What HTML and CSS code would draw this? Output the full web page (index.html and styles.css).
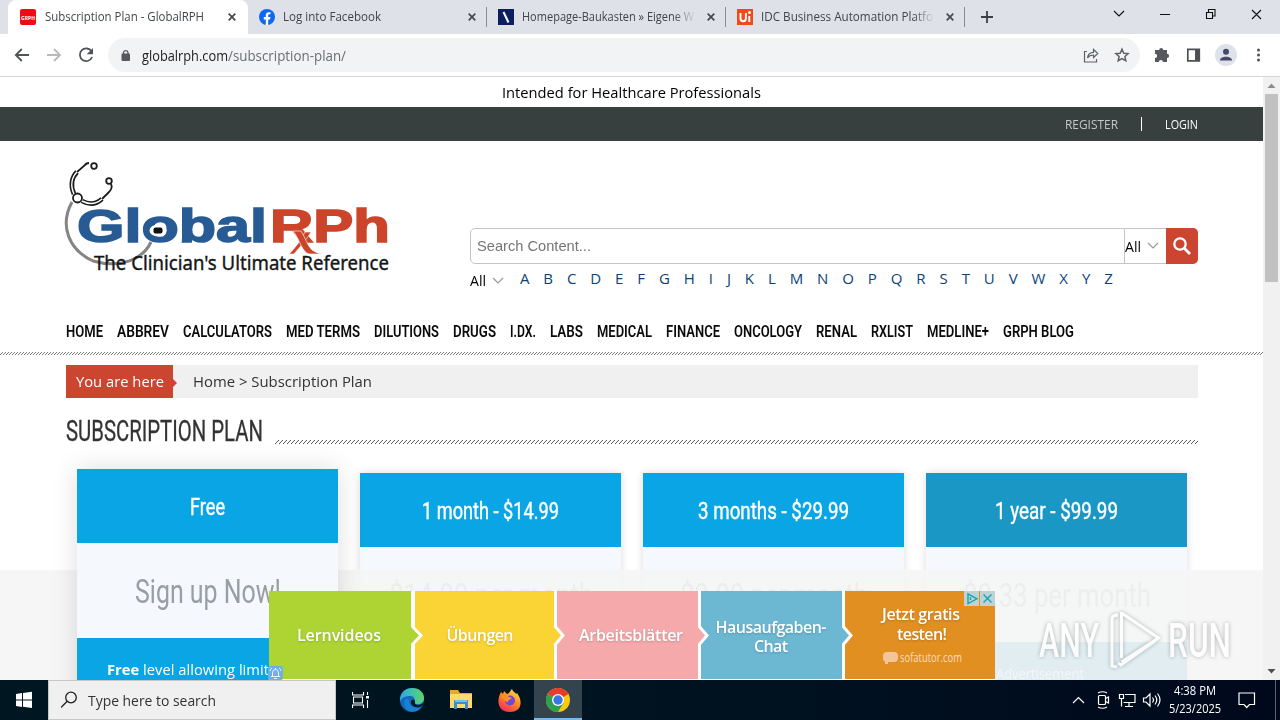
FILE: index.html
```html
<!DOCTYPE html>
<html lang="en">

<head>
  <meta charset="UTF-8">
  <meta name="viewport" content="width=device-width, initial-scale=1.0">
  <title>Subscription Plan - GlobalRPH</title>
  <link rel="stylesheet" href="styles.css">
</head>

<body>
  <div class="tabs">
    <div class="tab active">
      <svg class="favicon" width="16" height="16"><rect width="16" height="16" rx="2" fill="#f00a14"/><text x="1" y="10.5" font-size="6" font-weight="700" fill="#fff" textLength="14" lengthAdjust="spacingAndGlyphs">GRPH</text></svg>
      <div class="tab-title"><span data-w="159">Subscription Plan - GlobalRPH</span></div>
      <svg class="close" width="8" height="8"><path d="M.7.7l6.6 6.6M7.3.7L.7 7.3"/></svg>
    </div>
    <div class="tab">
      <svg class="favicon" width="16" height="16"><circle cx="8" cy="8" r="8" fill="#1068ee"/><path d="M6.8 16v-5.6h-2V8h2V6.4c0-2.1 1.2-3.2 3-3.2l1.7.1v2h-1c-1 0-1.3.6-1.3 1.2V8h2.2l-.4 2.4H9.2V16z" fill="#fff"/></svg>
      <div class="tab-title"><span data-w="98">Log into Facebook</span></div>
      <svg class="close" width="8" height="8"><path d="M.7.7l6.6 6.6M7.3.7L.7 7.3"/></svg>
      <i class="sep"></i>
    </div>
    <div class="tab">
      <svg class="favicon" width="16" height="16"><path fill="#0c2060" d="M0 0h16v16H0z"/><path d="M5.500 3l5 10.500" stroke="#fff" stroke-width="2"/></svg>
      <div class="tab-title fade"><span data-w="172">Homepage-Baukasten » Eigene W</span></div>
      <svg class="close" width="8" height="8"><path d="M.7.7l6.6 6.6M7.3.7L.7 7.3"/></svg>
      <i class="sep"></i>
    </div>
    <div class="tab">
      <svg class="favicon" width="16" height="16"><path fill="#f04a1c" d="M0 0h16v16H0z"/><path d="M3.500 4v5.300q0 3 2.700 3t2.700-3V4M12.300 7v6" fill="none" stroke="#fff" stroke-width="1.900"/><circle cx="12.500" cy="3.600" r="1.500" fill="#fff"/></svg>
      <div class="tab-title fade"><span data-w="172">IDC Business Automation Platfo</span></div>
      <svg class="close" width="8" height="8"><path d="M.7.7l6.6 6.6M7.3.7L.7 7.3"/></svg>
      <i class="sep"></i>
    </div>
    <svg class="new-tab" width="12" height="12"><path d="M6 0v12M0 6h12" stroke="#3c4043" stroke-width="1.800"/></svg>
    <svg class="window-buttons" width="152" height="28" fill="none" stroke="#111" stroke-width="1.100"><path d="M2 11l5 5 5-5M48 14.500h10M94.500 12.500h6v6h-6zM96.500 12v-2.500h6.500v6.500h-2.500M140 10l9 9M149 10l-9 9"/></svg>
  </div>

  <div class="toolbar">
    <svg width="100" height="42" fill="none" stroke="#50545a" stroke-width="1.800"><path d="M29 21H16M21.800 15L15.800 21l6 6"/><path d="M47 21h13M54 15l6 6-6 6" stroke="#b8babd"/><path d="M91.600 17.500a6.300 6.300 0 1 0 .5 5.500"/><path d="M93 14v6.300h-6.300z" fill="#50545a" stroke="none"/></svg>
    <div class="omnibox">
      <svg width="10" height="13"><rect x="0.500" y="4.500" width="8.500" height="7.500" rx="1" fill="#55595e"/><path d="M2.500 6V3.500a2.300 2.300 0 0 1 4.500 0V6" fill="none" stroke="#55595e" stroke-width="1.300"/></svg>
      <div class="url"><span data-w="86">globalrph.com</span><span class="path" data-w="118">/subscription-plan/</span></div>
      <svg width="48" height="18" fill="none" stroke="#5f6368" stroke-width="1.200"><path d="M4 5.500H1.500v10.500h12v-3M4.500 12c.5-4 3-5.700 6-5.700V3.500l4.300 4-4.300 4V9c-2.600 0-4.500.8-6 3z"/><path stroke-width="1.500" d="M39 3.200l1.800 4 4.300.4-3.200 2.900.9 4.200-3.800-2.200-3.800 2.200.9-4.200-3.200-2.900 4.300-.4z"/></svg>
    </div>
    <svg class="actions" width="130" height="42"><path d="M14 16h3.200a2 2 0 0 1 4 0H25v3.800a2.100 2.100 0 0 1 0 4.200v4h-4a2.100 2.100 0 0 0-4.200 0H13v-4a2.100 2.100 0 0 0 0-4.200V16z" fill="#55595e"/><path d="M45.800 15.300h11.500v11.500H45.800z" fill="#fff" stroke="#4d5156" stroke-width="1.700"/><path d="M53 15h5v12h-5z" fill="#4d5156"/><circle cx="84" cy="21" r="11" fill="#dfe1eb"/><circle cx="84" cy="17.800" r="3" fill="#45496a"/><path d="M78 26.500c0-5 12-5 12 0z" fill="#45496a"/><g fill="#4d5156"><circle cx="116.500" cy="16" r="1.500"/><circle cx="116.500" cy="21" r="1.500"/><circle cx="116.500" cy="26" r="1.500"/></g></svg>
  </div>

  <div class="viewport">
    <div class="page">
      <div class="notice"><span data-w="259">Intended for Healthcare Professionals</span></div>
      <div class="topbar">
        <span class="register" data-w="53">REGISTER</span>
        <i></i>
        <span data-w="33">LOGIN</span>
      </div>

      <div class="header">
        <svg class="logo" width="330" height="125" viewBox="62 155 330 125">
          <path d="M72 202C59 226 69 250 93 261C121 269 143 259 151 242" fill="none" stroke="#858585" stroke-width="3"/>
          <g fill="none" stroke="#1c1c1c" stroke-width="1.800">
            <path d="M77 172l7-6q2-3 5-3M102 199l7-7q4-4 2-8"/>
            <path d="M74 194c-4-9-2-17 3-22M82 201q11 6 20-2" stroke-width="4.800"/>
            <path d="M74 194c-4-9-2-17 3-22M82 201q11 6 20-2" stroke="#fff" stroke-width="1.500"/>
            <circle cx="94" cy="166" r="2.800"/><circle cx="109" cy="181" r="2.800"/>
            <circle cx="77.500" cy="198" r="4.500" fill="#fff"/>
          </g>
          <text x="77" y="242" class="brand" fill="#285b94" stroke="#285b94" textLength="190" lengthAdjust="spacingAndGlyphs">Global</text>
          <text x="270" y="242" class="brand" fill="#cc452b" stroke="#cc452b" textLength="120" lengthAdjust="spacingAndGlyphs">RPh</text>
          <ellipse cx="158" cy="230.500" rx="8.500" ry="6" fill="#fff"/><rect x="153.500" y="227.500" width="9" height="6" rx="2" fill="#111"/>
          <g fill="#cc452b" stroke="#fff" stroke-width=".6">
            <path d="M305 232h6c-4 7-11 15-17 22h-5c7-7 12-14 16-22z"/>
            <path d="M293 231h8c4 6 6 14 11 19q4 3 10 4h-12c-8 0-11-17-17-23z"/>
          </g>
          <text x="94" y="269.500" class="tagline" textLength="295" lengthAdjust="spacingAndGlyphs">The Clinician's Ultimate Reference</text>
        </svg>
        <div class="search">
          <div class="search-box">
            <div class="search-input"><span data-w="114">Search Content...</span></div>
            <div class="search-select"><span data-w="16">All</span><svg width="12" height="8"><path d="M1 1l5 5 5-5"/></svg></div>
            <div class="search-button"><svg width="20" height="20" fill="none" stroke="#fff"><circle cx="8" cy="8" r="5.700" stroke-width="2.300"/><path d="M12 12l6 6" stroke-width="2.800"/></svg></div>
          </div>
          <div class="letters">
            <div class="letter-select"><span data-w="16">All</span><svg width="12" height="8"><path d="M1 1l5 5 5-5"/></svg></div>
            <a>A</a><a>B</a><a>C</a><a>D</a><a>E</a><a>F</a><a>G</a><a>H</a><a>I</a><a>J</a><a>K</a><a>L</a><a>M</a><a>N</a><a>O</a><a>P</a><a>Q</a><a>R</a><a>S</a><a>T</a><a>U</a><a>V</a><a>W</a><a>X</a><a>Y</a><a>Z</a>
          </div>
        </div>
      </div>

      <div class="nav">
        <a data-w="37">HOME</a>
        <a data-w="52">ABBREV</a>
        <a data-w="89">CALCULATORS</a>
        <a data-w="74">MED TERMS</a>
        <a data-w="65">DILUTIONS</a>
        <a data-w="43">DRUGS</a>
        <a data-w="26">I.DX.</a>
        <a data-w="33">LABS</a>
        <a data-w="55">MEDICAL</a>
        <a data-w="54">FINANCE</a>
        <a data-w="68">ONCOLOGY</a>
        <a data-w="41">RENAL</a>
        <a data-w="42">RXLIST</a>
        <a data-w="62">MEDLINE+</a>
        <a data-w="71">GRPH BLOG</a>
      </div>
      <svg class="stripes" width="1263" height="3">
        <defs><pattern id="hatch" width="3" height="3" patternUnits="userSpaceOnUse"><path d="M2 0h1v1H2zM1 1h1v1H1zM0 2h1v1H0z" fill="#777"/></pattern></defs>
        <rect width="1263" height="3" fill="url(#hatch)"/>
      </svg>

      <div class="breadcrumb">
        <div class="here"><span data-w="88">You are here</span></div>
        <span class="trail" data-w="179">Home &gt; Subscription Plan</span>
      </div>

      <div class="title">
        <h1 data-w="197">SUBSCRIPTION PLAN</h1>
        <svg width="923" height="4">
          <defs><pattern id="hatch2" width="4" height="4" patternUnits="userSpaceOnUse"><path d="M3 0h1v1H3zM2 1h1v1H2zM1 2h1v1H1zM0 3h1v1H0z" fill="#555"/></pattern></defs>
          <rect width="923" height="4" fill="url(#hatch2)"/>
        </svg>
      </div>

      <div class="plans">
        <div class="plan featured">
          <div class="plan-name"><span data-w="35">Free</span></div>
          <div class="plan-price"><span data-w="146">Sign up Now!</span></div>
          <div class="plan-text"><span data-w="162"><b>Free</b> level allowing limit</span></div>
        </div>
        <div class="plan">
          <div class="plan-name"><span data-w="137">1 month - $14.99</span></div>
          <div class="plan-price"><span data-w="204">$14.99 per month</span></div>
          <div class="plan-text"></div>
        </div>
        <div class="plan">
          <div class="plan-name"><span data-w="151">3 months - $29.99</span></div>
          <div class="plan-price"><span data-w="188">$9.99 per month</span></div>
          <div class="plan-text"></div>
        </div>
        <div class="plan year">
          <div class="plan-name"><span data-w="123">1 year - $99.99</span></div>
          <div class="plan-price"><span data-w="188">$8.33 per month</span></div>
          <div class="plan-text"><span data-w="88">Advertisement</span></div>
        </div>
      </div>

      <div class="ad-strip"></div>
      <svg class="ad" width="726" height="89">
        <path fill="#fff" d="M0 0h726v89H0z"/>
        <path fill="#add433" d="M0 0h142v88H0z"/>
        <path fill="#fad434" d="M146 0h139v88H146z"/>
        <path fill="#f5a9ab" d="M288 0h141v88H288z"/>
        <path fill="#6cb8d3" d="M432 0h141v88H432z"/>
        <path fill="#e28f22" d="M576 0h150v88H576z"/>
        <g stroke="#fff" stroke-width="3">
          <path fill="#add433" d="M142 34l10 10.500-10 10.500"/>
          <path fill="#fad434" d="M285 34l9 10.500-9 10.500"/>
          <path fill="#f5a9ab" d="M429 34l9 10.500-9 10.500"/>
          <path fill="#6cb8d3" d="M573 34l9 10.500-9 10.500"/>
        </g>
        <path fill="#add433" d="M138 32h4v25h-4z"/><path fill="#fad434" d="M281 32h4v25h-4z"/><path fill="#f5a9ab" d="M425 32h4v25h-4z"/><path fill="#6cb8d3" d="M569 32h4v25h-4z"/>
        <g class="ad-text">
          <text x="28" y="50" textLength="84">Lernvideos</text>
          <text x="177.500" y="50" textLength="67">Übungen</text>
          <text x="310" y="50" textLength="104">Arbeitsblätter</text>
          <text x="446.500" y="42" textLength="111">Hausaufgaben-</text>
          <text x="485" y="61" textLength="34">Chat</text>
          <text x="613" y="29" textLength="78">Jetzt gratis</text>
          <text x="628" y="49" textLength="50">testen!</text>
        </g>
        <rect x="614" y="61" width="15" height="10" rx="4" fill="#f5c59a"/><path d="M616 69h3v4h-3z" fill="#f5c59a"/>
        <text class="ad-domain" x="631" y="71" textLength="62" lengthAdjust="spacingAndGlyphs">sofatutor.com</text>
        <path fill="#bed3d6" d="M695 0h15v15h-15zM711 0h15v15h-15z"/>
        <path d="M699 3v9.500l9-4.700zM701.500 6v3M714.500 3.500l8 8M722.500 3.500l-8 8" fill="none" stroke="#16a5b5" stroke-width="1.400"/>
      </svg>
      <svg class="bell" width="15" height="14"><rect width="15" height="14" rx="2" fill="#6cb1e6"/><path d="M3 10.500h9M4.500 10V7q0-3.500 3-3.500t3 3.500v3M7.500 2v2M6 12.500h3M2 5q0-2 2-3M13 5q0-2-2-3" fill="none" stroke="#e6f4ff"/></svg>
      <svg class="watermark" width="200" height="70">
        <text x="4" y="50" textLength="60" lengthAdjust="spacingAndGlyphs">ANY</text>
        <text x="133" y="50" textLength="63" lengthAdjust="spacingAndGlyphs">RUN</text>
        <path d="M86.500 5v46M86.500 6l37 25-37 24M77 11v48l5 1M77 11q1-3 6-3M120 34L86 58l-3-2"/>
      </svg>
    </div>
    <div class="scrollbar">
      <svg width="17" height="17"><path d="M4.500 11l4-4.500 4 4.500z" fill="#8c8c8c"/></svg>
      <div class="thumb"></div>
      <svg width="17" height="17"><path d="M4.500 6l4 4.500 4-4.500z" fill="#505050"/></svg>
    </div>
  </div>

  <div class="taskbar">
    <svg width="48" height="40"><path fill="#fff" d="M16 14l6-.9v6.400h-6zM23 13l9-1.200v7.700h-9zM16 20.500h6v6.400l-6-.9zM23 20.500h9V28l-9-1.200z"/></svg>
    <div class="task-search">
      <svg width="18" height="18" fill="none" stroke="#222" stroke-width="1.300"><circle cx="10" cy="6.500" r="5.300"/><path d="M6.200 10.300L0 16.500"/></svg>
      <span data-w="128">Type here to search</span>
    </div>
    <div class="task-item"><svg width="18" height="18" fill="none" stroke="#fff" stroke-width="1.100"><path d="M.500 1v3h11V1M.500 17v-3h11v3M1.500 6h9v6h-9zM15.500 1v3M15.500 9v8"/><path d="M14 5h3v2.500h-3z" fill="#fff" stroke="none"/></svg></div>
    <div class="task-item"><svg width="24" height="24"><defs><linearGradient id="edge" x1="0" y1="0" x2="1" y2="0"><stop offset="0" stop-color="#28a9e8"/><stop offset="1" stop-color="#5dd66a"/></linearGradient></defs><circle cx="12" cy="12" r="12" fill="#1268bd"/><path d="M0 12C0 4 6 0 12 0c8 0 12 5 12 10 0 4-3 6-6 6-4 0-4-1-3-3 0-3-2-5-5-5-5 0-9 2-10 6z" fill="url(#edge)"/><path d="M9 12q0 9 12 7-4 6-12 4-8-5-3-13z" fill="#1a80d3"/><path d="M15 13q-1 3 2 4 4 1 7-3-2 7-9 5-5-2-4-6 2-3 4 0z" fill="#001620"/></svg></div>
    <div class="task-item"><svg width="22" height="20"><path fill="#e5a832" d="M0 0h8l2 3h12v4H0z"/><path fill="#ffda6b" d="M0 4h22v14H0z"/><path fill="#3b8ecb" d="M4 10h14v9h-3v-5H7v5H4z"/><path fill="#75c4ee" d="M5 10h12v2H5z"/></svg></div>
    <div class="task-item"><svg width="24" height="24"><defs><linearGradient id="fox" x1=".8" y1="0" x2=".2" y2="1"><stop offset="0" stop-color="#ffe33e"/><stop offset=".45" stop-color="#ff8a22"/><stop offset="1" stop-color="#f22560"/></linearGradient></defs><path d="M3 4l2 2 1-3 3 3c2 0 3-3 5-5 1 3 3 3 4 5l1-1c6 8 5 19-7 19S-2 13 3 4z" fill="url(#fox)"/><circle cx="12" cy="12.500" r="5" fill="#7446d7"/><path d="M3 8c3-2 6-1 8 1l3 1c-1 2-4 1-4 4-3 0-4-3-7-6z" fill="#ff9226"/></svg></div>
    <div class="task-item current"><svg width="24" height="24"><circle cx="12" cy="12" r="12" fill="#fbc914"/><path d="M12 12L1.600 6A12 12 0 0 1 22.400 6z" fill="#e63b2e"/><path d="M1.600 6A12 12 0 0 0 12 24l5.500-9L12 12z" fill="#2d9f4d"/><path d="M12 6h10.400l-1-1.500L12 3z" fill="#e63b2e"/><circle cx="12" cy="12" r="6" fill="#fff"/><circle cx="12" cy="12" r="4.700" fill="#3578e5"/></svg></div>
    <svg class="tray" width="92" height="40" fill="none" stroke="#fff" stroke-width="1.200"><path d="M2 23l5.500-5.500L13 23"/><rect x="27.500" y="15.500" width="7" height="9" rx="1"/><path d="M34.500 18.500l3-1.500v6l-3-1.500M27 13q4.500-2.500 9 0M27 27q4.500 2.500 9 0M54 14.500h10v8H52.500M48.500 14.500h4v4h-4zM50.500 18.500v8M58 23v3M54 26.500h8M72.500 18h2.500l4-4v12l-4-4h-2.500zM81.500 17.500q2 2.500 0 5M84 15.500q3.500 4.500 0 9M86.500 13.500q5 6.500 0 13"/></svg>
    <div class="clock"><span data-w="42">4:38 PM</span><span data-w="52">5/23/2025</span></div>
    <svg class="notify" width="18" height="18" fill="none" stroke="#fff" stroke-width="1.200"><path d="M1 2h15.500v11.500h-5L8.700 16.500 6 13.500H1z"/></svg>
    <i class="show-desktop"></i>
  </div>

  <script>
    document.querySelectorAll('[data-w]').forEach(function (el) {
      const width = Number(el.dataset.w);
      const natural = el.getBoundingClientRect().width;
      el.style.transform = 'scaleX(' + width / natural + ')';
      el.style.marginRight = (width - natural) + 'px';
    });
  </script>
</body>

</html>
```
FILE: styles.css
```css
* {
  box-sizing: border-box;
}

body {
  margin: 0;
  width: 1280px;
  height: 720px;
  overflow: hidden;
  display: flex;
  flex-direction: column;
  font-family: "Open Sans", "Noto Sans", sans-serif;
  background: #fff;
}

svg {
  display: block;
  flex: none;
}

[data-w] {
  display: inline-block;
  flex: none;
  white-space: nowrap;
  transform-origin: 0 50%;
}

/* browser */
.tabs {
  height: 34px;
  flex: none;
  display: flex;
  background: #dee1e8;
  padding-left: 8px;
}

.tab {
  width: 239px;
  height: 34px;
  display: flex;
  align-items: center;
  padding: 0 0 1px 11px;
  font-size: 12px;
  color: #41454a;
}

.tab.active {
  width: 240px;
  padding-left: 12px;
  background: #fff;
  border-radius: 8px 8px 0 0;
}

.tab-title {
  width: 175px;
  margin: 0 8px 0 9px;
  overflow: hidden;
  line-height: 20px;
  display: flex;
}

.tab:not(.active) .tab-title {
  margin-left: 8px;
  width: 177px;
}

.tab-title.fade {
  -webkit-mask-image: linear-gradient(90deg, #000 86%, transparent 98%);
  mask-image: linear-gradient(90deg, #000 86%, transparent 98%);
}

.close {
  fill: none;
  stroke: #45494e;
  stroke-width: 1.7;
}

.sep {
  width: 1px;
  height: 20px;
  margin-left: 10px;
  background: #898c92;
}

.new-tab {
  margin: 11px 0 0 16px;
}

.window-buttons {
  margin-left: 119px;
}

.toolbar {
  height: 43px;
  flex: none;
  display: flex;
  align-items: center;
  border-bottom: 1px solid #d6d7d9;
}

.omnibox {
  width: 1032px;
  height: 34px;
  margin-left: 8px;
  padding: 0 9px 0 13px;
  display: flex;
  align-items: center;
  border-radius: 17px;
  background: #f1f3f5;
}

.actions {
  margin-left: 2px;
}

.url {
  flex: 1;
  display: flex;
  padding-left: 11px;
  font-size: 14px;
  color: #202124;
}

.url .path {
  color: #696d72;
}

.viewport {
  height: 603px;
  flex: none;
  display: flex;
}

.page {
  position: relative;
  width: 1263px;
  height: 603px;
  overflow: hidden;
}

.scrollbar {
  width: 17px;
  display: flex;
  flex-direction: column;
  background: #f1f1f1;
}

.scrollbar .thumb {
  width: 13px;
  height: 188px;
  margin: 0 2px auto;
  background: #c1c1c1;
}

/* site header */
.notice {
  height: 30px;
  padding-left: 502px;
  line-height: 31px;
  font-size: 15px;
  color: #000;
}

.topbar {
  height: 34px;
  display: flex;
  align-items: center;
  justify-content: flex-end;
  padding-right: 65px;
  background: #383f3f;
  color: #fff;
  font-size: 13.5px;
}

.topbar .register {
  color: #c3c7c7;
}

.topbar i {
  width: 1px;
  height: 14px;
  margin: 0 23px;
  background: #fff;
}

.header {
  height: 179px;
  display: flex;
  padding: 14px 65px 0 62px;
}

.brand {
  font-family: "Liberation Sans", sans-serif;
  font-weight: 700;
  font-size: 47px;
  stroke-width: 1.6;
}

.tagline {
  font-family: "Noto Sans", sans-serif;
  font-size: 20px;
  fill: #161616;
  stroke: #161616;
  stroke-width: .4;
}

.search {
  width: 728px;
  margin: 73px 0 0 78px;
}

.search-box {
  height: 36px;
  display: flex;
  border: 1px solid #c4c4c4;
  border-radius: 5px;
  font-family: "Liberation Sans", sans-serif;
}

.search-input {
  flex: 1;
  padding-left: 6px;
  line-height: 34px;
  font-size: 15px;
  color: #757575;
}

.search-select,
.letter-select {
  display: flex;
  align-items: center;
  gap: 6px;
  font-size: 14px;
  font-family: "Open Sans", sans-serif;
}

.search-select {
  width: 43px;
  border-left: 1px solid #c4c4c4;
}

.search-select svg,
.letter-select svg {
  fill: none;
  stroke: #999;
  stroke-width: 1.2;
}

.search-button {
  width: 32px;
  height: 36px;
  margin: -1px;
  display: flex;
  align-items: center;
  justify-content: center;
  border-radius: 0 5px 5px 0;
  background: #cb4530;
}

.letters {
  height: 28px;
  display: flex;
  align-items: center;
  gap: 13.92px;
  font-size: 15px;
  color: #0c4378;
}

.letters .letter-select {
  width: 36px;
  padding-top: 5px;
  color: #000;
}

.nav {
  height: 32px;
  display: flex;
  gap: 14px;
  padding-left: 66px;
  line-height: 23px;
  font-family: Roboto, sans-serif;
  font-weight: 600;
  font-size: 16.5px;
  color: #0a0a0a;
}

.breadcrumb {
  height: 33px;
  margin: 10px 65px 0 66px;
  display: flex;
  background: #f0f0f0;
  line-height: 33px;
  font-size: 15px;
  color: #333;
}

.here {
  position: relative;
  width: 107px;
  padding-left: 10px;
  margin-right: 20px;
  background: #cb4530;
  color: #fff;
}

.here::after {
  content: "";
  position: absolute;
  left: 107px;
  top: 14px;
  border-left: 4px solid #cb4530;
  border-top: 4px solid transparent;
  border-bottom: 4px solid transparent;
}

.title {
  height: 49px;
  margin-top: 17px;
  padding-left: 66px;
  display: flex;
}

.title h1 {
  margin: 0;
  line-height: 32px;
  font-family: Roboto, sans-serif;
  font-weight: 400;
  font-size: 29.5px;
  color: #333;
  -webkit-text-stroke: .3px #333;
}

.title svg {
  margin: 25px 0 0 12px;
}

/* plans */
.plans {
  display: grid;
  grid-template-columns: repeat(4, 261px);
  column-gap: 22px;
  padding: 9px 0 0 77px;
}

.plan {
  height: 260px;
  background: #f5f8fc;
  box-shadow: 0 0 8px rgba(0, 0, 0, .14);
  text-align: center;
  font-family: Roboto, sans-serif;
}

.plan.featured {
  position: relative;
  z-index: 2;
  margin-top: -4px;
  box-shadow: 0 0 25px rgba(0, 0, 0, .13);
}

.plan-name {
  height: 74px;
  line-height: 76px;
  background: #0aa5e5;
  color: #fff;
  font-size: 23.5px;
  -webkit-text-stroke: .4px #fff;
}

.plan-price {
  height: 95px;
  line-height: 97px;
  font-size: 34px;
  color: #999da6;
}

.plan-text {
  height: 91px;
  padding: 20px 0 0 30px;
  background: #0aa5e5;
  color: #fff;
  text-align: left;
  font-family: "Open Sans", sans-serif;
  font-size: 15px;
  line-height: 22px;
}

.year .plan-name,
.year .plan-text {
  background: #1b97c5;
}

.year .plan-text {
  padding-left: 70px;
}

/* anchored ad */
.ad-strip {
  position: absolute;
  left: 0;
  right: 0;
  bottom: 0;
  height: 110px;
  background: rgba(245, 245, 245, .91);
}

.ad {
  position: absolute;
  z-index: 3;
  left: 269px;
  top: 514px;
}

.ad-text {
  fill: #fff;
  font-size: 16px;
  font-weight: 600;
  filter: drop-shadow(0 1px 1px rgba(0, 0, 0, .18));
}

.ad-domain {
  fill: #fadcbc;
  font-size: 12px;
}

.bell {
  position: absolute;
  z-index: 4;
  left: 268px;
  top: 589px;
}

.watermark {
  position: absolute;
  z-index: 4;
  left: 1035px;
  top: 530px;
  fill: none;
  stroke: #fff;
  stroke-width: 3;
  filter: drop-shadow(0 0 2px rgba(0, 0, 0, .35));
  opacity: .8;
}

.watermark text {
  font-family: Roboto, sans-serif;
  font-size: 49px;
  font-weight: 500;
  fill: #fff;
  stroke: none;
}

/* taskbar */
.taskbar {
  height: 40px;
  flex: none;
  display: flex;
  align-items: center;
  background: linear-gradient(90deg, #001620, #001320 50%, #00091c);
}

.task-search {
  width: 288px;
  height: 40px;
  display: flex;
  align-items: center;
  gap: 9px;
  padding-left: 12px;
  border: 1px solid #c5c7c9;
  background: #f0f0f0;
  color: #333;
  font-size: 14.5px;
}

.task-item {
  width: 49px;
  height: 40px;
  display: flex;
  align-items: center;
  justify-content: center;
}

.task-item:nth-child(3) {
  width: 51px;
  padding-right: 2px;
}

.task-item.current {
  width: 48px;
  padding-top: 2px;
  background: #33444f;
  border-bottom: 2px solid #76b9ed;
}

.tray {
  margin-left: auto;
}

.clock {
  width: 60px;
  margin-left: 2px;
  display: flex;
  flex-direction: column;
  align-items: center;
  color: #fff;
  font-size: 12px;
  line-height: 18px;
}

.notify {
  margin: 0 19px 0 13px;
}

.show-desktop {
  width: 1px;
  height: 40px;
  margin-right: 4px;
  background: #59616b;
}
```
